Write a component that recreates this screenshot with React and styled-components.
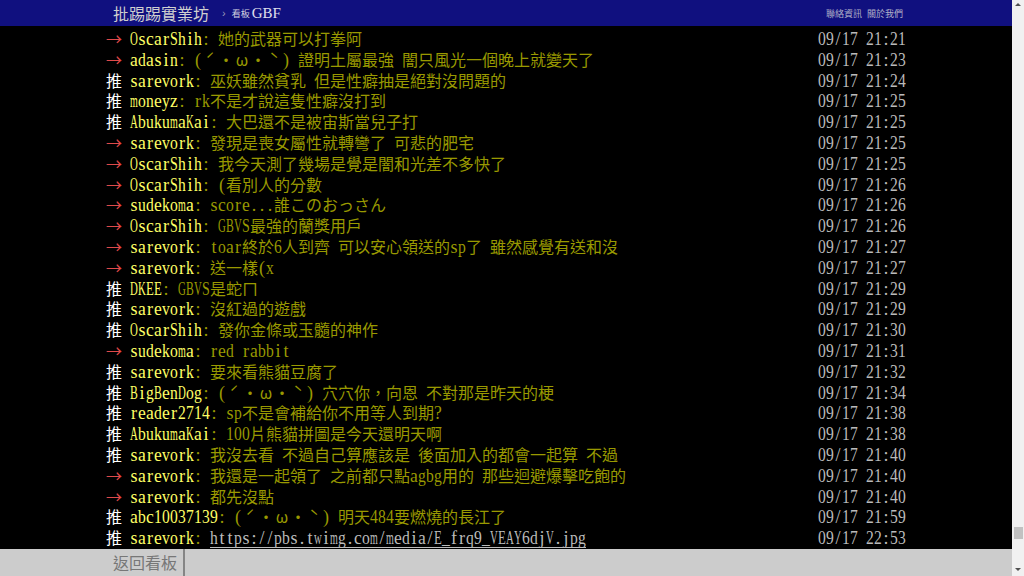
import React from 'react'
import styled, { createGlobalStyle } from 'styled-components'

const GlobalStyle = createGlobalStyle`
  html, body {
    margin: 0;
    padding: 0;
    height: 100%;
    background: #000;
    overflow: hidden;
  }
  #root {
    height: 100%;
  }
`

const pushes = [
  ['→', 'OscarShih', '她的武器可以打拳阿', '21:21'],
  ['→', 'adasin', '(ˊ・ω・ˋ) 證明土屬最強 闇只風光一個晚上就變天了', '21:23'],
  ['推', 'sarevork', '巫妖雖然貧乳 但是性癖抽是絕對沒問題的', '21:24'],
  ['推', 'moneyz', 'rk不是才說這隻性癖沒打到', '21:25'],
  ['推', 'AbukumaKai', '大巴還不是被宙斯當兒子打', '21:25'],
  ['→', 'sarevork', '發現是喪女屬性就轉彎了 可悲的肥宅', '21:25'],
  ['→', 'OscarShih', '我今天測了幾場是覺是闇和光差不多快了', '21:25'],
  ['→', 'OscarShih', '(看別人的分數', '21:26'],
  ['→', 'sudekoma', 'score...誰このおっさん', '21:26'],
  ['→', 'OscarShih', 'GBVS最強的蘭獎用戶', '21:26'],
  ['→', 'sarevork', 'toar終於6人到齊 可以安心領送的sp了 雖然感覺有送和沒', '21:27'],
  ['→', 'sarevork', '送一樣(x', '21:27'],
  ['推', 'DKEE', 'GBVS是蛇ㄇ', '21:29'],
  ['推', 'sarevork', '沒紅過的遊戲', '21:29'],
  ['推', 'OscarShih', '發你金條或玉髓的神作', '21:30'],
  ['→', 'sudekoma', 'red rabbit', '21:31'],
  ['推', 'sarevork', '要來看熊貓豆腐了', '21:32'],
  ['推', 'BigBenDog', '(ˊ・ω・ˋ) 穴穴你，向恩 不對那是昨天的梗', '21:34'],
  ['推', 'reader2714', 'sp不是會補給你不用等人到期?', '21:38'],
  ['推', 'AbukumaKai', '100片熊貓拼圖是今天還明天啊', '21:38'],
  ['推', 'sarevork', '我沒去看 不過自己算應該是 後面加入的都會一起算 不過', '21:40'],
  ['→', 'sarevork', '我還是一起領了 之前都只點agbg用的 那些迴避爆擊吃飽的', '21:40'],
  ['→', 'sarevork', '都先沒點', '21:40'],
  ['推', 'abc10037139', '(ˊ・ω・ˋ) 明天484要燃燒的長江了', '21:59'],
  ['推', 'sarevork', 'https://pbs.twimg.com/media/E_frq9_VEAY6djV.jpg', '22:53', true],
]

// Times advance widths (per 1000 em), used to squeeze serif glyphs into 8px cells
const W = {
  ' ': 250, '(': 333, ')': 333, ',': 250, '-': 333, '.': 250, '/': 278, ':': 278, '?': 444, '_': 500,
  A: 722, B: 667, C: 667, D: 722, E: 611, F: 556, G: 722, H: 722, I: 333, J: 389, K: 722, L: 611, M: 889,
  N: 722, O: 722, P: 556, Q: 722, R: 667, S: 556, T: 611, U: 722, V: 722, W: 944, X: 722, Y: 722, Z: 611,
  a: 444, b: 500, c: 444, d: 500, e: 444, f: 333, g: 500, h: 500, i: 278, j: 278, k: 500, l: 278, m: 778,
  n: 500, o: 500, p: 500, q: 500, r: 333, s: 389, t: 278, u: 500, v: 500, w: 722, x: 500, y: 500, z: 444,
}
const LATIN_SIZE = 18
const MAX_GLYPH = 7.8

const Layout = styled.div`
  display: flex;
  height: 100%;
`

const Page = styled.div`
  flex: 1;
  display: flex;
  flex-direction: column;
  min-width: 0;
`

const Topbar = styled.header`
  height: 26px;
  background: #10107f;
  flex-shrink: 0;
`

const Container = styled.div`
  width: 800px;
  margin: 0 auto;
  height: 100%;
  display: flex;
  align-items: center;
`

const Logo = styled.a`
  padding-left: 7px;
  font-family: "Noto Sans CJK TC", sans-serif;
  font-size: 16px;
  color: #cfcfcf;
  text-decoration: none;
`

const Crumb = styled.span`
  margin-left: 13px;
  font-family: "Liberation Sans", sans-serif;
  font-size: 11px;
  color: #9a9ab8;
`

const BoardLabel = styled.span`
  margin-left: 6px;
  font-family: "Noto Sans CJK TC", sans-serif;
  font-size: 9px;
  color: #cfcfdf;
`

const BoardName = styled.a`
  margin-left: 2px;
  font-family: "Liberation Serif", serif;
  font-size: 15px;
  color: #e0e0ee;
  text-decoration: none;
`

const TopLinks = styled.div`
  margin-left: auto;
  padding-right: 3px;
  display: flex;
  gap: 5px;
  font-family: "Noto Sans CJK TC", sans-serif;
  font-size: 9px;
  color: #b0b0c8;
`

const Content = styled.main`
  flex: 1;
  overflow: hidden;
  background: #000;
`

const Pushes = styled.div`
  width: 800px;
  margin: 0 auto;
  padding-top: 2px;
`

const Push = styled.div`
  display: flex;
  align-items: baseline;
  height: 20.8px;
  line-height: 20.8px;
  white-space: pre;
  font-family: "Noto Sans CJK TC", sans-serif;
  font-size: 16px;
`

const Tag = styled.span`
  display: inline-block;
  width: 24px;
  color: ${p => (p.$arrow ? '#e04a4a' : '#fff')};
`

const UserId = styled.span`
  color: #ff6;
`

const Text = styled.span`
  color: #990;
`

const Link = styled.a`
  color: #bbb;
  font-family: "Liberation Serif", serif;
  font-size: ${LATIN_SIZE}px;
  background: linear-gradient(#bbb, #bbb) 0 19px / 100% 1px no-repeat;
`

const Time = styled.span`
  margin-left: auto;
  color: #bbb;
`

const Cell = styled.span`
  display: inline-flex;
  justify-content: center;
  width: 8px;
  font-family: "Liberation Serif", serif;
  font-size: ${LATIN_SIZE}px;
`

const Wide = styled.span`
  font-family: "Noto Sans CJK TC", sans-serif;
  font-size: 16px;
`

const Sym = styled.span`
  display: inline-block;
  width: 16px;
  text-align: center;
  font-family: "Noto Sans CJK TC", sans-serif;
  font-size: 16px;
`

const Footer = styled.footer`
  height: 27px;
  background: #cccccc;
  flex-shrink: 0;
`

const BackButton = styled.a`
  padding: 0 6px 0 7px;
  line-height: 27px;
  height: 27px;
  border-right: 2px solid #858585;
  font-family: "Noto Sans CJK TC", sans-serif;
  font-size: 16px;
  color: #777;
  text-decoration: none;
`

const Scrollbar = styled.div`
  width: 12px;
  flex-shrink: 0;
  background: #f1f1f1;
  display: flex;
  flex-direction: column;
  align-items: center;
`

const Arrow = styled.div`
  width: 0;
  height: 0;
  margin: ${p => (p.$down ? '0 0 5px' : '3px 0 0')};
  border-left: 3px solid transparent;
  border-right: 3px solid transparent;
  ${p => (p.$down ? 'border-top: 3px solid #505050;' : 'border-bottom: 3px solid #505050;')}
`

const Track = styled.div`
  flex: 1;
  width: 100%;
  display: flex;
  flex-direction: column;
  justify-content: flex-end;
  align-items: center;
  padding-bottom: 29px;
  box-sizing: border-box;
`

const Thumb = styled.div`
  width: 9px;
  height: 12px;
  margin-left: 1px;
  background: #c1c1c1;
`

// half-width chars each get an 8px cell, full-width runs keep the 16px CJK advance
function cells(text) {
  const out = []
  let buf = ''
  const flush = () => {
    if (buf) out.push(<Wide key={'w' + out.length}>{buf}</Wide>)
    buf = ''
  }
  for (const ch of text) {
    const code = ch.codePointAt(0)
    if (code < 0x80) {
      flush()
      const adv = ((W[ch] || 500) * LATIN_SIZE) / 1000
      const s = Math.min(1, MAX_GLYPH / adv)
      out.push(
        <Cell key={out.length} style={s < 1 ? { transform: `scaleX(${s.toFixed(3)})` } : undefined}>
          {ch === ' ' ? '' : ch}
        </Cell>
      )
    } else if (code < 0x2e80) {
      flush()
      out.push(<Sym key={out.length}>{ch}</Sym>)
    } else {
      buf += ch
    }
  }
  flush()
  return out
}

export default function App() {
  return (
    <>
      <GlobalStyle />
      <Layout>
        <Page>
          <Topbar>
            <Container>
              <Logo>批踢踢實業坊</Logo>
              <Crumb>›</Crumb>
              <BoardLabel>看板</BoardLabel>
              <BoardName>GBF</BoardName>
              <TopLinks>
                <span>聯絡資訊</span>
                <span>關於我們</span>
              </TopLinks>
            </Container>
          </Topbar>
          <Content>
            <Pushes>
              {pushes.map(([tag, user, text, time, isLink], i) => (
                <Push key={i}>
                  <Tag $arrow={tag === '→'}>{tag}</Tag>
                  <UserId>{cells(user)}</UserId>
                  {isLink ? (
                    <Text>
                      {cells(': ')}
                      <Link>{cells(text)}</Link>
                    </Text>
                  ) : (
                    <Text>{cells(': ' + text)}</Text>
                  )}
                  <Time>{cells('09/17 ' + time)}</Time>
                </Push>
              ))}
            </Pushes>
          </Content>
          <Footer>
            <Container>
              <BackButton>返回看板</BackButton>
            </Container>
          </Footer>
        </Page>
        <Scrollbar>
          <Arrow />
          <Track>
            <Thumb />
          </Track>
          <Arrow $down />
        </Scrollbar>
      </Layout>
    </>
  )
}
